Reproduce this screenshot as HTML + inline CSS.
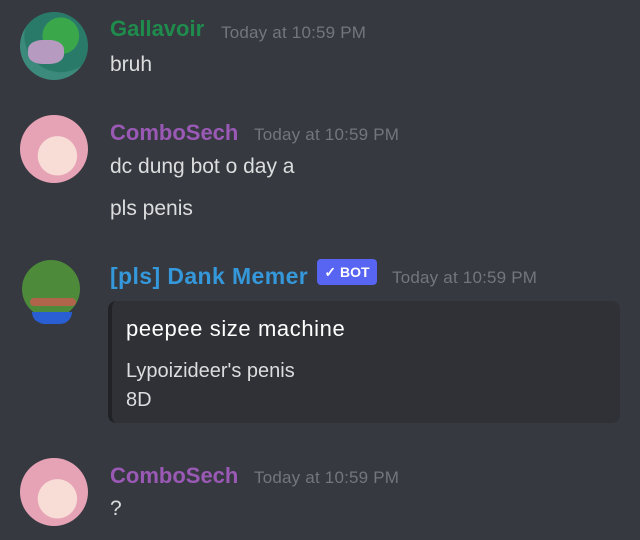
<!DOCTYPE html>
<html><head><meta charset="utf-8"><style>
body{margin:0;width:640px;height:540px;background:#36393f;font-family:"Liberation Sans",sans-serif;position:relative;overflow:hidden}
.a{position:absolute;border-radius:50%;width:68px;height:68px;left:20px;overflow:hidden}
.t{position:absolute;white-space:nowrap}
.n{font-weight:bold;font-size:22px}
.ts{font-size:17px;color:#72767d;letter-spacing:0.2px}
.m{font-size:21px;color:#dcddde}
</style></head><body>
<div class="a" style="top:12px;background:radial-gradient(circle at 60% 35%,#3aa84a 0 30%,#2a7a6a 31% 60%,#3b8a7c 61%)"><div style="position:absolute;left:8px;top:28px;width:36px;height:24px;background:#b69ac0;border-radius:40%"></div></div>
<div class="t n" style="left:110px;top:16px;color:#1f8b4c">Gallavoir</div>
<div class="t ts" style="left:221px;top:23px">Today at 10:59 PM</div>
<div class="t m" style="left:110px;top:53px">bruh</div>

<div class="a" style="top:115px;background:radial-gradient(circle at 55% 60%,#f7ddd6 0 35%,#e7a3b6 36%)"></div>
<div class="t n" style="left:110px;top:120px;color:#9b59b6">ComboSech</div>
<div class="t ts" style="left:254px;top:125px">Today at 10:59 PM</div>
<div class="t m" style="left:110px;top:155px">dc dung bot o day a</div>
<div class="t m" style="left:110px;top:197px">pls penis</div>

<div class="a" style="top:258px;background:transparent"><div style="position:absolute;left:2px;top:2px;width:58px;height:58px;border-radius:50%;background:#4d8b3a"></div><div style="position:absolute;left:12px;top:54px;width:40px;height:12px;border-radius:0 0 20px 20px;background:#2a5fd4"></div><div style="position:absolute;left:10px;top:40px;width:46px;height:8px;border-radius:4px;background:#b0654a"></div></div>
<div class="t n" style="left:110px;top:263px;color:#3498db;font-size:23px;letter-spacing:0.4px">[pls] Dank Memer</div>
<div class="t" style="left:317px;top:259px;width:60px;height:26px;background:#5865f2;border-radius:4px;color:#fff;font-size:14px;font-weight:bold;line-height:26px;text-align:center">✓ BOT</div>
<div class="t ts" style="left:392px;top:268px">Today at 10:59 PM</div>
<div class="t" style="left:108px;top:301px;width:508px;height:122px;background:#2f3136;border-left:4px solid #202225;border-radius:8px"></div>
<div class="t" style="left:126px;top:316px;font-size:22px;color:#fff;letter-spacing:0.6px">peepee size machine</div>
<div class="t" style="left:126px;top:360px;font-size:20px;color:#dcddde">Lypoizideer's penis</div>
<div class="t" style="left:126px;top:389px;font-size:20px;color:#dcddde">8D</div>

<div class="a" style="top:458px;background:radial-gradient(circle at 55% 60%,#f7ddd6 0 35%,#e7a3b6 36%)"></div>
<div class="t n" style="left:110px;top:463px;color:#9b59b6">ComboSech</div>
<div class="t ts" style="left:254px;top:468px">Today at 10:59 PM</div>
<div class="t m" style="left:110px;top:497px">?</div>
</body></html>
